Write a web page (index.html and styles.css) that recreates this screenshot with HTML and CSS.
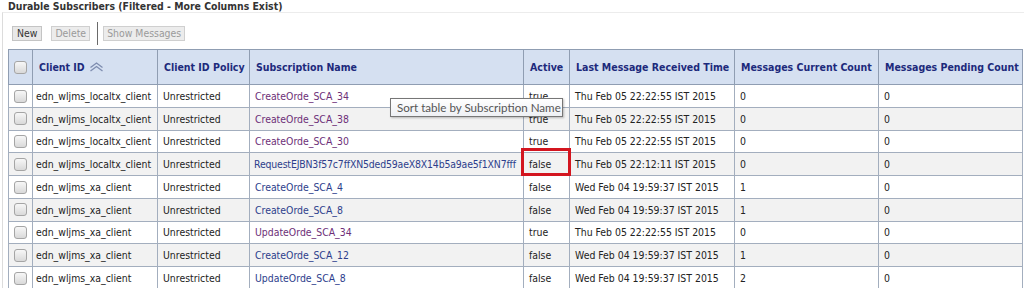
FILE: index.html
```html
<!DOCTYPE html>
<html>
<head>
<meta charset="utf-8">
<link rel="stylesheet" href="styles.css">
</head>
<body>
<h2 class="title">Durable Subscribers (Filtered - More Columns Exist)</h2>
<div class="panel">
  <div class="toolbar">
    <button class="btn">New</button>
    <button class="btn disabled">Delete</button>
    <span class="sep"></span>
    <button class="btn disabled">Show Messages</button>
  </div>
  <div class="table-wrap">
    <table class="grid">
      <colgroup>
        <col class="c-chk"><col class="c-id"><col class="c-pol"><col class="c-sub"><col class="c-act"><col class="c-time"><col class="c-cur"><col class="c-pend">
      </colgroup>
      <thead>
        <tr>
          <th class="chk"><span class="cb"></span></th>
          <th>Client ID <svg class="sort" width="15" height="10" viewBox="0 0 15 10"><path d="M1.5 5.5 L7.5 1 L13.5 5.5" fill="none" stroke="#7f8db0" stroke-width="1.4"/><path d="M1.5 9 L7.5 4.5 L13.5 9" fill="none" stroke="#7f8db0" stroke-width="1.4"/></svg></th>
          <th>Client ID Policy</th>
          <th>Subscription Name</th>
          <th>Active</th>
          <th>Last Message Received Time</th>
          <th>Messages Current Count</th>
          <th>Messages Pending Count</th>
        </tr>
      </thead>
      <tbody>
        <tr><td class="chk"><span class="cb"></span></td><td class="id">edn_wljms_localtx_client</td><td>Unrestricted</td><td><a class="lnk v">CreateOrde_SCA_34</a></td><td>true</td><td>Thu Feb 05 22:22:55 IST 2015</td><td>0</td><td>0</td></tr>
        <tr><td class="chk"><span class="cb"></span></td><td class="id">edn_wljms_localtx_client</td><td>Unrestricted</td><td><a class="lnk v">CreateOrde_SCA_38</a></td><td>true</td><td>Thu Feb 05 22:22:55 IST 2015</td><td>0</td><td>0</td></tr>
        <tr><td class="chk"><span class="cb"></span></td><td class="id">edn_wljms_localtx_client</td><td>Unrestricted</td><td><a class="lnk v">CreateOrde_SCA_30</a></td><td>true</td><td>Thu Feb 05 22:22:55 IST 2015</td><td>0</td><td>0</td></tr>
        <tr><td class="chk"><span class="cb"></span></td><td class="id">edn_wljms_localtx_client</td><td>Unrestricted</td><td class="sub-long"><a class="lnk long">RequestEJBN3f57c7ffXN5ded59aeX8X14b5a9ae5f1XN7fff</a></td><td>false</td><td>Thu Feb 05 22:12:11 IST 2015</td><td>0</td><td>0</td></tr>
        <tr><td class="chk"><span class="cb"></span></td><td class="id">edn_wljms_xa_client</td><td>Unrestricted</td><td><a class="lnk">CreateOrde_SCA_4</a></td><td>false</td><td>Wed Feb 04 19:59:37 IST 2015</td><td>1</td><td>0</td></tr>
        <tr><td class="chk"><span class="cb"></span></td><td class="id">edn_wljms_xa_client</td><td>Unrestricted</td><td><a class="lnk">CreateOrde_SCA_8</a></td><td>false</td><td>Wed Feb 04 19:59:37 IST 2015</td><td>1</td><td>0</td></tr>
        <tr><td class="chk"><span class="cb"></span></td><td class="id">edn_wljms_xa_client</td><td>Unrestricted</td><td><a class="lnk v">UpdateOrde_SCA_34</a></td><td>true</td><td>Thu Feb 05 22:22:55 IST 2015</td><td>0</td><td>0</td></tr>
        <tr><td class="chk"><span class="cb"></span></td><td class="id">edn_wljms_xa_client</td><td>Unrestricted</td><td><a class="lnk">CreateOrde_SCA_12</a></td><td>false</td><td>Wed Feb 04 19:59:37 IST 2015</td><td>1</td><td>0</td></tr>
        <tr><td class="chk"><span class="cb"></span></td><td class="id">edn_wljms_xa_client</td><td>Unrestricted</td><td><a class="lnk">UpdateOrde_SCA_8</a></td><td>false</td><td>Wed Feb 04 19:59:37 IST 2015</td><td>2</td><td>0</td></tr>
      </tbody>
    </table>
    <div class="tooltip">Sort table by Subscription Name</div>
    <div class="highlight"></div>
  </div>
</div>
</body>
</html>
```
FILE: styles.css
```css
html, body {
  margin: 0;
  background: #fff;
}
body {
  font-family: "DejaVu Sans Condensed", "DejaVu Sans", sans-serif;
  font-size: 10.4px;
  color: #222;
  overflow: hidden;
}
.title {
  margin: 0;
  padding-left: 8px;
  font-size: 10.4px;
  font-weight: bold;
  line-height: 12px;
  color: #333;
  white-space: nowrap;
}
.panel {
  margin-left: 2px;
  border-left: 1px solid #dcdcdc;
  border-top: 1px solid #ececec;
  padding-left: 5px;
}
.toolbar {
  display: flex;
  align-items: flex-start;
  height: 37px;
}
.btn {
  margin: 13px 0 0 0;
  height: 15px;
  padding: 0 3px;
  border: 1px solid #c4c4c4;
  background: #e8e8e8;
  font-family: "DejaVu Sans Condensed", "DejaVu Sans", sans-serif;
  font-size: 10.4px;
  line-height: 13px;
  color: #333;
}
.btn:first-child { margin-left: 4px; margin-right: 9px; padding: 0 4px; }
.btn.disabled { color: #9a9a9a; background: #ececec; border-color: #cfcfcf; }
.sep {
  margin: 9px 5px 0 7px;
  width: 1px;
  height: 23px;
  background: #6a6a6a;
}
.table-wrap {
  position: relative;
  margin-top: -1px;
}
.grid {
  border-collapse: collapse;
  table-layout: fixed;
  width: 1014px;
}
.c-chk { width: 24px; }
.c-id { width: 125px; }
.c-pol { width: 92px; }
.c-sub { width: 274px; }
.c-act { width: 46px; }
.c-time { width: 165px; }
.c-cur { width: 144px; }
.c-pend { width: 144px; }
.grid th {
  height: 34px;
  padding: 0 6px;
  background: #d5e0f1;
  border: 1px solid #8f9db2;
  color: #1d2a7c;
  font-size: 10.5px;
  font-weight: bold;
  text-align: left;
  white-space: nowrap;
}
.grid td {
  height: 21.75px;
  padding: 0 4px 0 5px;
  border: 1px solid #a3aebe;
  white-space: nowrap;
  overflow: hidden;
  color: #222;
}
.grid tbody tr:nth-child(even) td { background: #f2f2f2; }
.grid td.id { padding-left: 3px; }
.grid td.sub-long { padding-left: 4px; padding-right: 0; }
.grid .chk { padding: 0; text-align: center; }
.cb {
  display: inline-block;
  width: 11px;
  height: 11px;
  border: 1px solid #a5a5a5;
  border-radius: 3px;
  background: linear-gradient(#f7f7f7, #d9d9d9);
  vertical-align: middle;
}
.sort { vertical-align: -1px; margin-left: 1px; }
.lnk { color: #2d3e8c; text-decoration: none; }
.lnk.v { color: #6d2f78; }
.lnk.long { letter-spacing: -0.15px; }
.tooltip {
  position: absolute;
  left: 382px;
  top: 49px;
  width: 173px;
  height: 19px;
  box-sizing: border-box;
  border: 1px solid #767676;
  background: linear-gradient(#ffffff, #eef0f4);
  box-shadow: 1px 1px 2px rgba(0,0,0,0.25);
  font-family: Lato, "Liberation Sans", sans-serif;
  font-size: 11.6px;
  line-height: 17px;
  color: #555;
  padding-left: 6px;
  white-space: nowrap;
}
.highlight {
  position: absolute;
  left: 513px;
  top: 99px;
  width: 50px;
  height: 28px;
  box-sizing: border-box;
  border: 3px solid #d3151f;
}
```
